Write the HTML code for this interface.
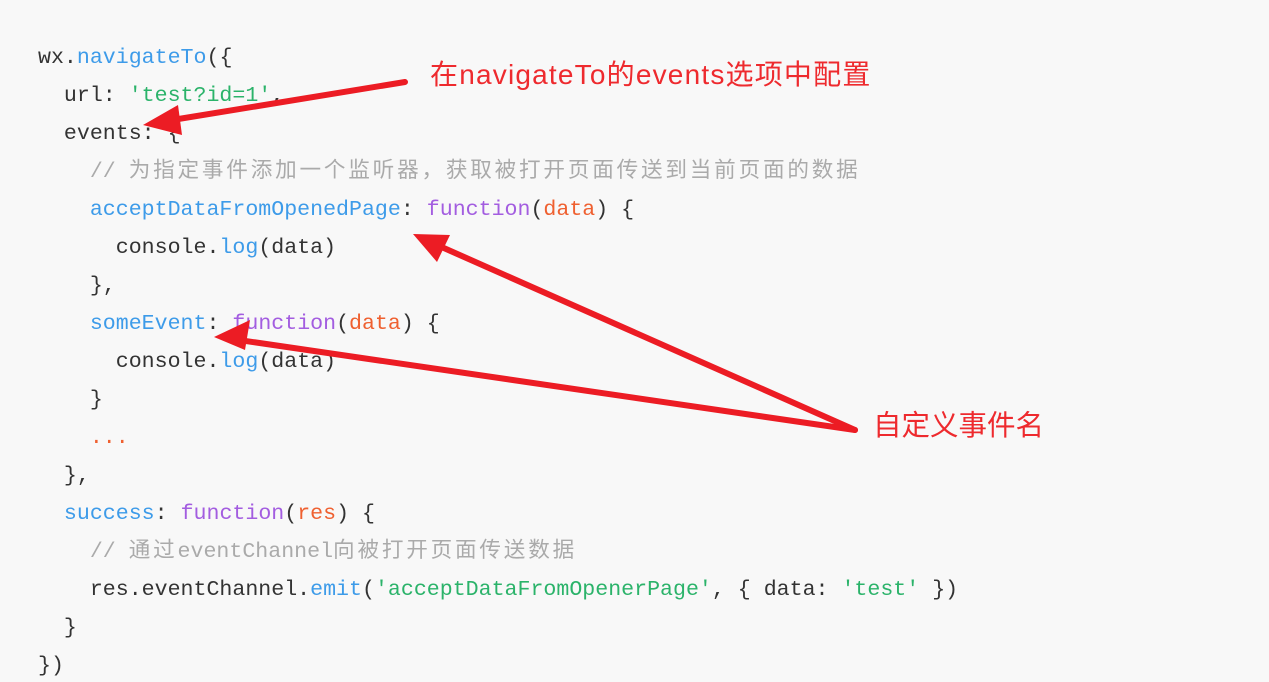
<!DOCTYPE html>
<html><head><meta charset="utf-8"><style>
html,body{margin:0;padding:0;background:#f8f8f8;width:1269px;height:682px;overflow:hidden;position:relative}
pre{position:absolute;left:38px;top:39px;margin:0;font-family:"Liberation Mono","Noto Sans CJK SC",monospace;font-size:21.6px;line-height:38px;color:#333}
.b{color:#3d9be9}.p{color:#a35de0}.o{color:#ef6030}.g{color:#2bb36a}.c{color:#aaa}
.z{letter-spacing:2.8px}
.lab{position:absolute;font-family:"Liberation Sans","Noto Sans CJK SC",sans-serif;color:#ee2a2e;white-space:nowrap}
</style></head><body>
<pre>wx.<span class="b">navigateTo</span>({
  url: <span class="g">'test?id=1'</span>,
  events: {
    <span class="c">// <span class="z">为指定事件添加一个监听器，获取被打开页面传送到当前页面的数据</span></span>
    <span class="b">acceptDataFromOpenedPage</span>: <span class="p">function</span>(<span class="o">data</span>) {
      console.<span class="b">log</span>(data)
    },
    <span class="b">someEvent</span>: <span class="p">function</span>(<span class="o">data</span>) {
      console.<span class="b">log</span>(data)
    }
    <span class="o">...</span>
  },
  <span class="b">success</span>: <span class="p">function</span>(<span class="o">res</span>) {
    <span class="c">// <span class="z">通过</span>eventChannel<span class="z">向被打开页面传送数据</span></span>
    res.eventChannel.<span class="b">emit</span>(<span class="g">'acceptDataFromOpenerPage'</span>, { data: <span class="g">'test'</span> })
  }
})</pre>
<svg width="1269" height="682" style="position:absolute;left:0;top:0">
<g stroke="#ec1c24" stroke-width="6" stroke-linecap="round" fill="none">
<line x1="405" y1="82" x2="160" y2="122"/>
<line x1="855" y1="430" x2="428" y2="241"/>
<line x1="855" y1="430" x2="232" y2="339"/>
</g>
<g fill="#ec1c24">
<polygon points="143,125 178,105 182,135"/>
<polygon points="413,234 450,235 437,262"/>
<polygon points="214,337 250,320 245,350"/>
</g>
</svg>
<div class="lab" style="left:430px;top:53px;font-size:28px;letter-spacing:1.2px">在navigateTo的events选项中配置</div>
<div class="lab" style="left:873px;top:403px;font-size:28.5px">自定义事件名</div>
</body></html>
